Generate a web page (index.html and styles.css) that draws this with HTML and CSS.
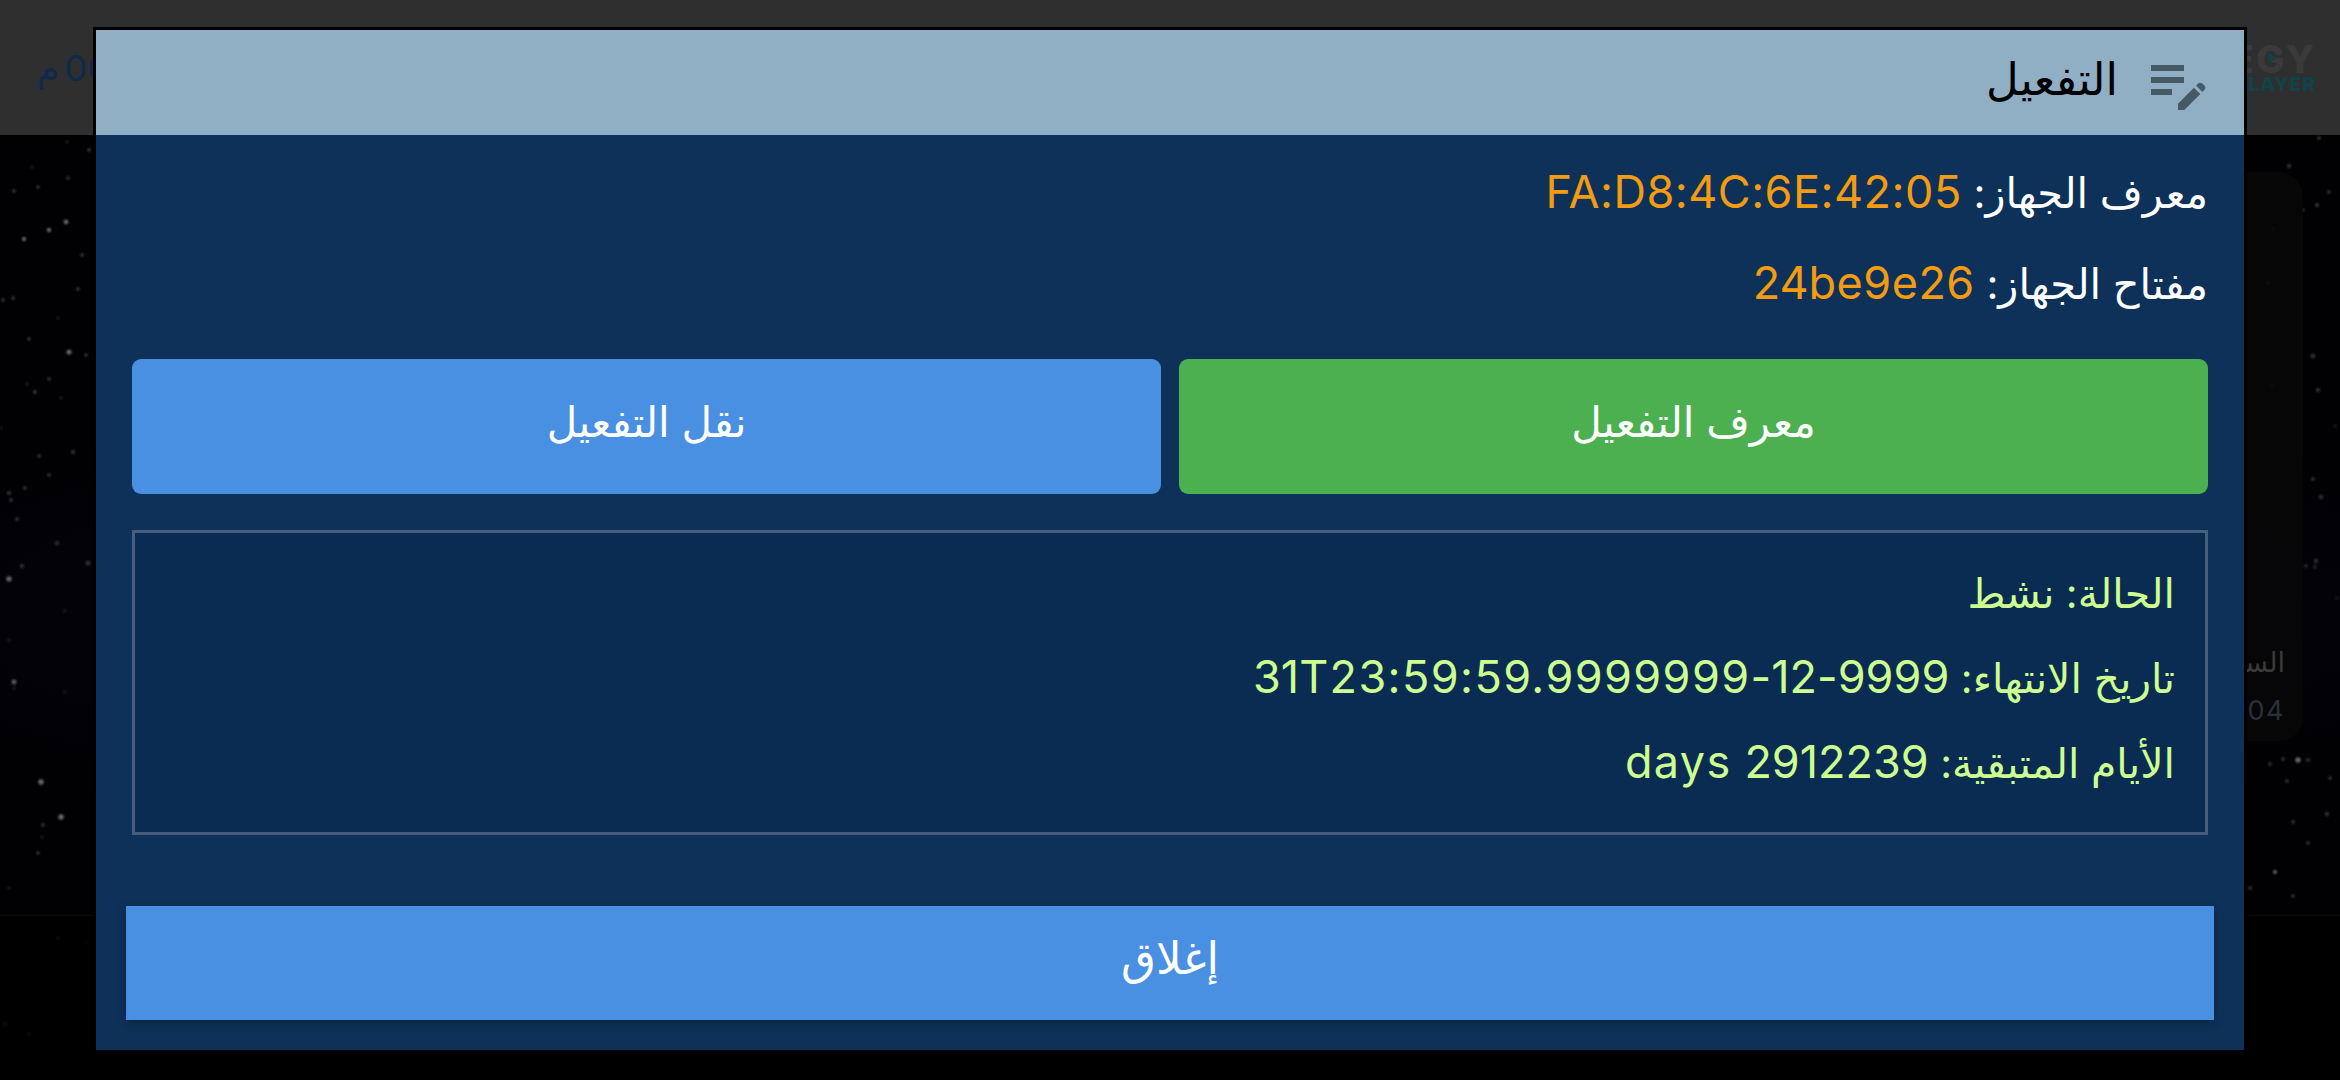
FILE: index.html
```html
<!DOCTYPE html>
<html lang="ar" dir="rtl">

<head>
	<meta charset="UTF-8">
	<title>التفعيل</title>
	<link rel="stylesheet" href="styles.css">
</head>

<body>

	<div class="page">

		<svg class="stars" viewBox="0 0 2340 1080">
			<g class="star_b">
				<circle cx="66" cy="222" r="2.4"/><circle cx="49" cy="230" r="2.2"/><circle cx="24" cy="239" r="2.2"/>
				<circle cx="69" cy="352" r="2.6"/><circle cx="9" cy="579" r="2.8"/><circle cx="14" cy="682" r="2.4"/>
				<circle cx="41" cy="782" r="2.8"/><circle cx="61" cy="817" r="2.8"/><circle cx="2298" cy="760" r="2.8"/>
				<circle cx="2275" cy="872" r="2"/>
			</g>
			<g class="star_m">
				<circle cx="89" cy="150" r="2"/><circle cx="38" cy="187" r="2"/><circle cx="14" cy="191" r="2"/>
				<circle cx="68" cy="178" r="2"/><circle cx="82" cy="255" r="2"/><circle cx="78" cy="289" r="2"/>
				<circle cx="13" cy="298" r="2"/><circle cx="3" cy="300" r="2"/><circle cx="29" cy="339" r="2"/>
				<circle cx="86" cy="355" r="2"/><circle cx="49" cy="379" r="2"/><circle cx="35" cy="392" r="2.2"/>
				<circle cx="73" cy="452" r="2.2"/><circle cx="39" cy="456" r="2"/><circle cx="49" cy="475" r="2"/>
				<circle cx="25" cy="488" r="2"/><circle cx="9" cy="493" r="2.2"/><circle cx="11" cy="500" r="2"/>
				<circle cx="17" cy="519" r="2"/><circle cx="57" cy="543" r="2.2"/><circle cx="88" cy="563" r="2.6"/>
				<circle cx="22" cy="566" r="2.2"/><circle cx="43" cy="825" r="2"/><circle cx="38" cy="853" r="2"/>
				<circle cx="2319" cy="138" r="2"/><circle cx="2289" cy="166" r="2.2"/><circle cx="2329" cy="192" r="2"/>
				<circle cx="2317" cy="205" r="2.2"/><circle cx="2303" cy="210" r="1.8"/><circle cx="2313" cy="356" r="2.4"/>
				<circle cx="2318" cy="390" r="2.2"/><circle cx="2313" cy="479" r="2"/><circle cx="2321" cy="497" r="2.2"/>
				<circle cx="2316" cy="561" r="2.2"/><circle cx="2306" cy="566" r="1.8"/><circle cx="2315" cy="567" r="1.8"/>
				<circle cx="2308" cy="760" r="2"/><circle cx="2283" cy="759" r="2"/><circle cx="2330" cy="778" r="2"/>
				<circle cx="2327" cy="814" r="2.2"/><circle cx="2293" cy="822" r="2"/><circle cx="2308" cy="843" r="2"/>
				<circle cx="2250" cy="888" r="2"/><circle cx="2293" cy="896" r="2"/><circle cx="2287" cy="781" r="2"/>
				<circle cx="2270" cy="764" r="2"/>
			</g>
			<g class="star_f">
				<circle cx="67" cy="142" r="2"/><circle cx="32" cy="167" r="2"/><circle cx="58" cy="318" r="2"/>
				<circle cx="27" cy="384" r="2"/><circle cx="61" cy="398" r="2"/><circle cx="1" cy="428" r="2"/>
				<circle cx="65" cy="611" r="2"/><circle cx="9" cy="640" r="2"/><circle cx="14" cy="688" r="2"/>
				<circle cx="65" cy="692" r="2"/><circle cx="42" cy="837" r="2"/><circle cx="9" cy="888" r="2"/>
				<circle cx="58" cy="938" r="2"/><circle cx="86" cy="942" r="1.6"/><circle cx="5" cy="1024" r="2.6"/>
				<circle cx="29" cy="1034" r="2"/><circle cx="2273" cy="229" r="2"/><circle cx="2268" cy="283" r="2"/>
				<circle cx="2272" cy="385" r="2"/><circle cx="2335" cy="426" r="2"/><circle cx="2337" cy="598" r="2"/>
			</g>
		</svg>

		<header class="topbar">
			<div class="logo">
				<span class="logo_top">EGY</span>
				<svg class="logo_play" viewBox="0 0 10 12"><path d="M0 0l10 6-10 6z"/></svg>
				<span class="logo_bottom">PLAYER</span>
			</div>
			<span class="clock">00 م</span>
		</header>

		<main class="space">
			<div class="side_card">
				<span>السبت</span>
				<span class="side_time">12:04</span>
			</div>
		</main>

		<div class="bottom_strip"></div>

	</div>

	<div class="overlay">
		<div class="modal">

			<div class="modal_head">
				<svg class="head_icon" viewBox="0 0 24 24">
					<path d="M3 10h11v2H3zM3 8h11V6H3zM3 16h7v-2H3zM18.01 12.87l.7-.7c.39-.39 1.02-.39 1.41 0l.71.71c.39.39.39 1.02 0 1.41l-.7.7zM17.3 13.58l-5.3 5.3V21h2.12l5.3-5.3z"/>
				</svg>
				<h2>التفعيل</h2>
			</div>

			<div class="modal_body">
				<p class="device_row">معرف الجهاز: <span>FA:D8:4C:6E:42:05</span></p>
				<p class="device_row">مفتاح الجهاز: <span>24be9e26</span></p>

				<div class="actions">
					<button class="btn btn_green">معرف التفعيل</button>
					<button class="btn btn_blue">نقل التفعيل</button>
				</div>

				<div class="status">
					<p>الحالة: نشط</p>
					<p>تاريخ الانتهاء: <span>9999-12-31T23:59:59.9999999</span></p>
					<p>الأيام المتبقية: <span>2912239 days</span></p>
				</div>
			</div>

			<div class="modal_foot">
				<button class="btn_close">إغلاق</button>
			</div>

		</div>
	</div>

</body>

</html>
```

FILE: styles.css
```css
* {
	box-sizing: border-box;
	font-family: "Inter", "DejaVu Sans", sans-serif;
}

html,
body {
	margin: 0;
	height: 100%;
	overflow: hidden;
}

body {
	background: #010103;
}

p,
h2 {
	margin: 0;
	font-weight: 400;
}

button {
	border: 0;
	color: #fff;
	font-size: 45px;
}

.page {
	height: 1080px;
	display: flex;
	flex-direction: column;
}

/* behind everything, the page's star picture */
.stars {
	position: absolute;
	top: 0;
	left: 0;
	width: 2340px;
	height: 1080px;
	z-index: -1;
	filter: blur(1px);
}

.star_b {
	fill: #66666c;
}

.star_m {
	fill: #303036;
}

.star_f {
	fill: #17171b;
}

.topbar {
	height: 135px;
	flex: none;
	background: #2f2f2f;
	display: flex;
	justify-content: space-between;
	align-items: center;
	padding: 0 24px 0 37px;
}

.clock {
	font-size: 36px;
	word-spacing: -5px;
	color: #10294d;
}

.logo {
	position: relative;
	display: flex;
	flex-direction: column;
	align-items: flex-start;
	width: 90px;
	padding-top: 3px;
}

.logo_top {
	font-size: 38px;
	line-height: 32px;
	font-weight: 800;
	letter-spacing: 2px;
	color: #3a3a3a;
}

.logo_play {
	position: absolute;
	top: 13px;
	left: 42px;
	width: 9px;
	height: 10px;
	fill: #0f4349;
}

.logo_bottom {
	font-size: 19px;
	line-height: 20px;
	font-weight: 800;
	letter-spacing: 1px;
	color: #0f4349;
}

.space {
	height: 780px;
	flex: none;
	padding: 37px 37px 0 0;
	background: radial-gradient(ellipse 1500px 260px at 50% 62%, rgba(16, 16, 60, 0.3), transparent);
}

.side_card {
	width: 300px;
	height: 569px;
	background: rgba(9, 9, 9, 0.7);
	border-radius: 24px;
	display: flex;
	flex-direction: column;
	justify-content: flex-end;
	padding: 0 18px 6px 0;
	font-size: 27px;
	color: #3a3a3a;
	line-height: 48px;
}

.side_time {
	direction: ltr;
	text-align: right;
	letter-spacing: 1.5px;
	color: #2b3038;
}

.bottom_strip {
	flex: 1;
	background: rgba(0, 0, 0, 0.5);
	border-top: 1px solid #0d0b08;
}

.overlay {
	position: absolute;
	inset: 0;
	display: flex;
	justify-content: center;
	align-items: flex-start;
	padding-top: 27px;
}

.modal {
	width: 2154px;
	height: 1023px;
	background: #0e3159;
	border: 3px solid #000;
	border-bottom: 0;
	display: flex;
	flex-direction: column;
}

.modal_head {
	height: 105px;
	flex: none;
	background: #90afc5;
	display: flex;
	align-items: center;
	gap: 24px;
	padding-right: 30px;
}

.head_icon {
	width: 72px;
	height: 72px;
	fill: #455a64;
}

.modal_head h2 {
	font-size: 45px;
	padding-bottom: 8px;
	color: #000;
}

.modal_body {
	flex: 1;
	padding: 12px 36px 0;
}

.device_row {
	font-size: 41.5px;
	line-height: 90px;
	color: #fff;
}

.device_row span {
	font-size: 45px;
	letter-spacing: 0.5px;
	color: #f39c12;
}

.actions {
	display: flex;
	gap: 18px;
	margin-top: 30px;
}

.btn {
	flex: 1;
	height: 135px;
	border-radius: 9px;
	font-size: 42px;
	padding-bottom: 12px;
}

.btn_green {
	background: #4caf50;
}

.btn_blue {
	background: #4a90e2;
}

.status {
	margin-top: 36px;
	height: 305px;
	padding: 18px 30px;
	border: 3px solid #455e7e;
	background: #0b2c52;
	font-size: 41px;
	line-height: 84px;
	color: #ccff90;
}

.status span {
	font-size: 45px;
	letter-spacing: 1.4px;
}

.modal_foot {
	padding: 0 30px 30px;
}

.btn_close {
	width: 100%;
	height: 114px;
	padding-bottom: 12px;
	background: #4a90e2;
	box-shadow: 0 3px 9px rgba(0, 0, 0, 0.25);
}
```
